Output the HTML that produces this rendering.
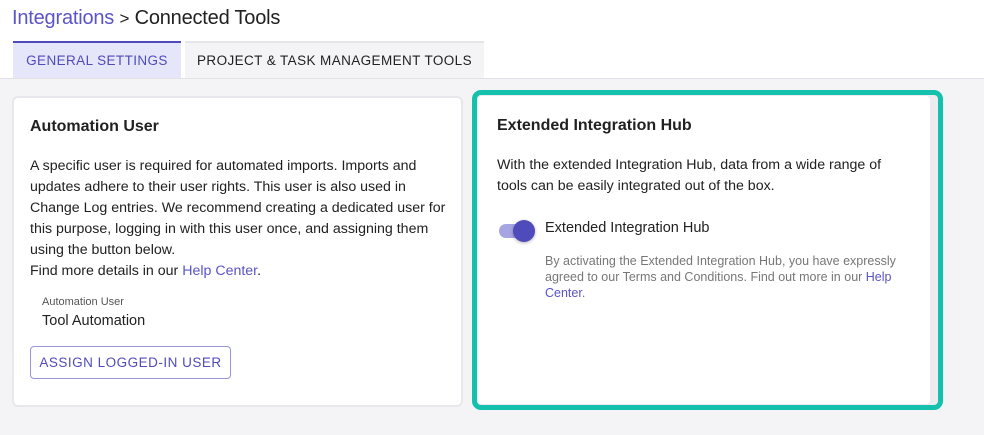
<!DOCTYPE html><html><head><style>
*{box-sizing:border-box;margin:0;padding:0}
body{width:984px;height:435px;background:#fff;font-family:"Liberation Sans",Arial,sans-serif;color:#212121;position:relative;overflow:hidden}
.h{position:absolute;left:12px;top:7px;font-size:20px;letter-spacing:-0.2px}
.h .a{color:#5a54c8}
.tabs{position:absolute;left:13px;top:41px;height:37px;display:flex}
.t{height:37px;font-size:13.5px;letter-spacing:.4px;line-height:36px;background:#f4f4f6;border-top:2px solid #e6e6ea;white-space:nowrap;text-align:center}
.t1{background:#e6e6fa;color:#4f4bbb;border-top:2px solid #4f4bbb;width:168px}
.t2{margin-left:4px;width:299px}
.bg{position:absolute;left:0;top:78px;width:984px;height:357px;background:#f4f4f6;border-top:1px solid #e2e2e6}
.card{position:absolute;background:#fff;border:2px solid #e8e8ec;border-radius:6px}
.c1{left:12px;top:96px;width:451px;height:311px;padding:20px 8px 20px 16px}
h3{font-size:16px;font-weight:bold;margin-bottom:20px}
p{font-size:14.2px;line-height:21px}
a{color:#5a54c8;text-decoration:none}
.teal{position:absolute;left:472px;top:90px;width:471px;height:320px;border:5px solid #14c1ad;border-radius:9px;background:#ececf0}
.c2{left:478px;top:96px;width:452px;height:308px;border:none;border-radius:4px;padding:21px 19px}
</style></head><body>
<div class="h"><span class="a">Integrations</span> <span style="font-size:17px">&gt;</span> Connected Tools</div>
<div class="tabs"><div class="t t1">GENERAL SETTINGS</div><div class="t t2">PROJECT &amp; TASK MANAGEMENT TOOLS</div></div>
<div class="bg"></div>
<div class="card c1">
<h3>Automation User</h3>
<p>A specific user is required for automated imports. Imports and updates adhere to their user rights. This user is also used in Change Log entries. We recommend creating a dedicated user for this purpose, logging in with this user once, and assigning them using the button below.<br>Find more details in our <a>Help Center</a>.</p>
<div style="margin:14px 0 0 12px;font-size:11px;color:#555">Automation User</div>
<div style="margin:5px 0 0 12px;font-size:14.5px">Tool Automation</div>
<div style="margin-top:17px;width:201px;height:33px;border:1px solid #9794d8;border-radius:4px;color:#4f4bbb;font-size:13.5px;letter-spacing:.5px;line-height:31px;text-align:center">ASSIGN LOGGED-IN USER</div>
</div>
<div class="teal"></div>
<div class="card c2">
<h3>Extended Integration Hub</h3>
<p>With the extended Integration Hub, data from a wide range of tools can be easily integrated out of the box.</p>
<div style="position:relative;margin-top:17px;height:39px">
<div style="position:absolute;left:2px;top:10px;width:34px;height:14px;border-radius:7px;background:#a6a4e3"></div>
<div style="position:absolute;left:16px;top:6px;width:22px;height:22px;border-radius:50%;background:#4f4bbb;box-shadow:0 1px 3px rgba(0,0,0,.3)"></div>
<div style="position:absolute;left:48px;top:6px;font-size:14.5px">Extended Integration Hub</div>
</div>
<p style="margin-left:48px;font-size:12.5px;line-height:16px;color:#777">By activating the Extended Integration Hub, you have expressly agreed to our Terms and Conditions. Find out more in our <a>Help Center</a>.</p>
</div>
</body></html>
